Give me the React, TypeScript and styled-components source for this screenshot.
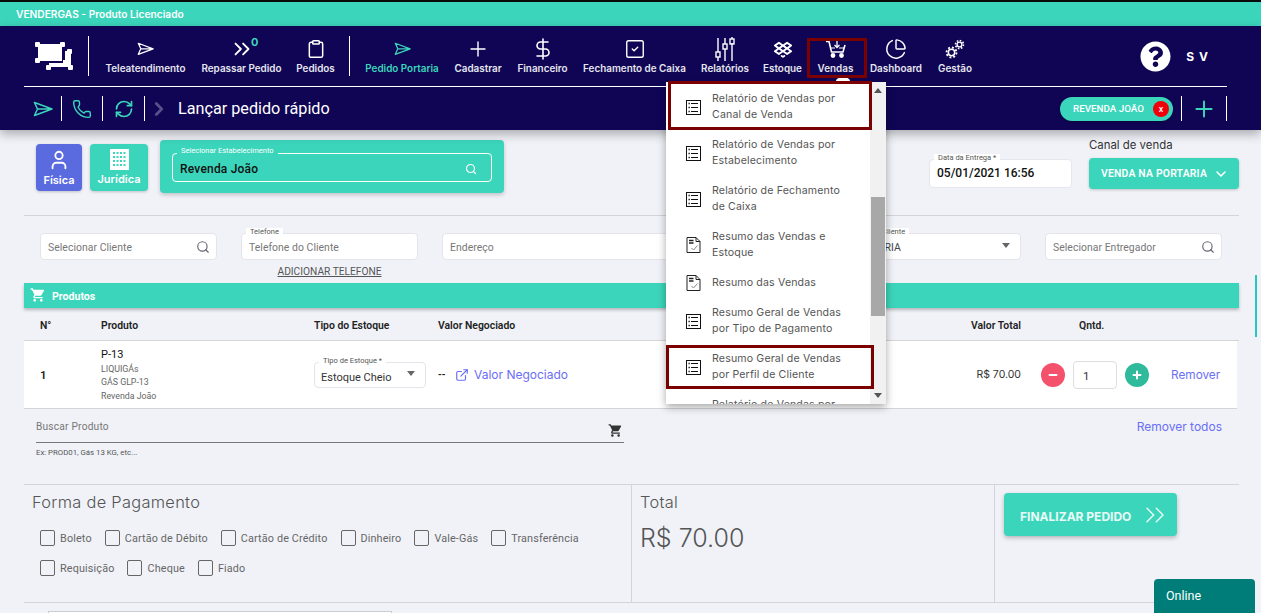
import styled, { createGlobalStyle } from "styled-components"
import {
  ChartPie,
  ChevronDown,
  ChevronRight,
  ChevronsRight,
  Clipboard,
  DollarSign,
  ExternalLink,
  Minus,
  Phone,
  Plus,
  RefreshCw,
  Search,
  SquareCheck,
  User,
} from "lucide-react"
import { FaQuestionCircle } from "react-icons/fa"
import { MdShoppingCart } from "react-icons/md"
import { PiDropboxLogoBold } from "react-icons/pi"

const TEAL = "#3bd5bb"
const NAVY = "#0f0554"
const RED = "#7b0000"
const BLUE = "#6a6ef5"
const LINE = "#d3d3d8"
const SANS = `"Inter", "Open Sans", sans-serif`
const ROBOTO = `"Roboto", "Liberation Sans", sans-serif`

const GlobalStyle = createGlobalStyle`
  * { box-sizing: border-box; }
  html, body { margin: 0; padding: 0; background: #f0f2f8; overflow: hidden; }
  body { font-family: ${ROBOTO}; }
`

function PlaneIcon({ size = 20 }: { size?: number }) {
  return (
    <svg width={size} height={size * 0.8} viewBox="0 0 20 16" fill="none" stroke="currentColor" strokeWidth="1.5">
      <path d="M1.5 1.5 L19 8 L1.5 14.5 L4.5 8 Z M4.5 8 H19" strokeLinejoin="round" />
    </svg>
  )
}

function LogoIcon() {
  return (
    <svg width="38" height="28" viewBox="0 0 38 28" fill="#fff">
      <rect x="3" y="2" width="24" height="17" />
      <rect x="0" y="0" width="5" height="5" rx="1" />
      <rect x="25" y="0" width="5" height="5" rx="1" />
      <rect x="0" y="16" width="5" height="5" rx="1" />
      <path d="M30 9 H36 V25 H14 V21 H28 V18 H30 Z" />
      <rect x="32" y="7" width="5" height="5" rx="1" />
      <rect x="33" y="23" width="5" height="5" rx="1" />
      <rect x="11" y="23" width="5" height="5" rx="1" />
    </svg>
  )
}

function SlidersIcon() {
  return (
    <svg width="20" height="24" viewBox="0 0 20 24" fill="none" stroke="currentColor" strokeWidth="1.4">
      <path d="M3 1 V15 M3 20 V24 M10 1 V7 M10 12 V24 M17 6 V24 M17 0 V2" />
      <rect x="1" y="15" width="4" height="5" />
      <rect x="8" y="7" width="4" height="5" />
      <rect x="15" y="2" width="4" height="5" />
    </svg>
  )
}

function VendasCartIcon() {
  return (
    <svg width="20" height="18" viewBox="0 0 20 18" fill="none" stroke="currentColor" strokeWidth="1.6">
      <path d="M0 1.5 H3 L5.5 12 H17 L19 5" />
      <path d="M11 1 V7 M8.5 5 L11 7.5 L13.5 5" strokeWidth="1.3" />
      <path d="M4.5 8 H9 M13 8 H18" strokeWidth="1.2" />
      <circle cx="7" cy="15.5" r="1.6" fill="currentColor" />
      <circle cx="15.5" cy="15.5" r="1.6" fill="currentColor" />
    </svg>
  )
}

function GearsIcon() {
  return (
    <svg width="20" height="20" viewBox="0 0 20 20" fill="none" stroke="currentColor">
      <circle cx="6.5" cy="13.5" r="3.2" strokeWidth="1.5" />
      <circle cx="6.5" cy="13.5" r="5" strokeWidth="1.8" strokeDasharray="1.9 2" />
      <circle cx="14.5" cy="5.5" r="2.4" strokeWidth="1.4" />
      <circle cx="14.5" cy="5.5" r="4" strokeWidth="1.6" strokeDasharray="1.6 1.5" />
    </svg>
  )
}

function BuildingIcon() {
  return (
    <svg width="19" height="21" viewBox="0 0 19 21" fill="#fff">
      <path
        fillRule="evenodd"
        d="M0 0 H19 V21 H0 Z M3 3 V5 H5 V3 Z M6.5 3 V5 H8.5 V3 Z M10 3 V5 H12 V3 Z M13.5 3 V5 H15.5 V3 Z M3 7 V9 H5 V7 Z M6.5 7 V9 H8.5 V7 Z M10 7 V9 H12 V7 Z M13.5 7 V9 H15.5 V7 Z M3 11 V13 H5 V11 Z M6.5 11 V13 H8.5 V11 Z M10 11 V13 H12 V11 Z M13.5 11 V13 H15.5 V11 Z M3 15 V17 H5 V15 Z M6.5 15 V17 H8.5 V15 Z M10 15 V17 H12 V15 Z M13.5 15 V17 H15.5 V15 Z"
      />
    </svg>
  )
}

function ReportIcon() {
  return (
    <svg width="15" height="15" viewBox="0 0 15 15" fill="none" stroke="#111" strokeWidth="1">
      <rect x="0.5" y="0.5" width="14" height="14" />
      <path d="M5 3.5 H12 M5 7.5 H12 M5 11.5 H12" />
      <path d="M2.5 3.5 H3.8 M2.5 7.5 H3.8 M2.5 11.5 H3.8" strokeWidth="1.3" />
    </svg>
  )
}

function SummaryIcon() {
  return (
    <svg width="15" height="16" viewBox="0 0 15 16" fill="none" stroke="#222" strokeWidth="1">
      <path d="M1 0.5 H10 L14 4.5 V15.5 H1 Z M10 0.5 V4.5 H14" />
      <path d="M3 3.5 H7.5 M3 6 H7.5" strokeWidth="1.3" />
      <path d="M5.5 11 L7.5 13 L11.5 8.5" stroke="#888" />
    </svg>
  )
}

const navLeft = [
  { label: "Teleatendimento", width: 81, icon: <PlaneIcon size={17} /> },
  { label: "Repassar Pedido", width: 79, icon: <ChevronsRight size={26} strokeWidth={1.7} /> },
  { label: "Pedidos", width: 37, icon: <Clipboard size={20} strokeWidth={1.8} /> },
]

const navRight = [
  { label: "Pedido Portaria", width: 72, icon: <PlaneIcon size={17} />, active: true },
  { label: "Cadastrar", width: 48, icon: <Plus size={24} strokeWidth={1.4} /> },
  { label: "Financeiro", width: 49, icon: <DollarSign size={24} strokeWidth={1.6} /> },
  { label: "Fechamento de Caixa", width: 103, icon: <SquareCheck size={22} strokeWidth={1.5} /> },
  { label: "Relatórios", width: 46, icon: <SlidersIcon /> },
  { label: "Estoque", width: 37, icon: <PiDropboxLogoBold size={20} /> },
  { label: "Vendas", width: 37, icon: <VendasCartIcon /> },
  { label: "Dashboard", width: 52, icon: <ChartPie size={22} strokeWidth={1.6} /> },
  { label: "Gestão", width: 34, icon: <GearsIcon /> },
]

const menuItems = [
  { text: "Relatório de Vendas por Canal de Venda", summary: false },
  { text: "Relatório de Vendas por Estabelecimento", summary: false },
  { text: "Relatório de Fechamento de Caixa", summary: false },
  { text: "Resumo das Vendas e Estoque", summary: true },
  { text: "Resumo das Vendas", summary: true, short: true },
  { text: "Resumo Geral de Vendas por Tipo de Pagamento", summary: false },
  { text: "Resumo Geral de Vendas por Perfil de Cliente", summary: false },
  { text: "Relatório de Vendas por Entregador", summary: false },
]

const payments = [
  ["Boleto", "Cartão de Débito", "Cartão de Crédito", "Dinheiro", "Vale-Gás", "Transferência"],
  ["Requisição", "Cheque", "Fiado"],
]

function App() {
  const renderNav = (items: typeof navRight) =>
    items.map((item) => (
      <NavItem key={item.label} $width={item.width} $active={item.active}>
        <NavIcon>{item.icon}</NavIcon>
        <span>{item.label}</span>
      </NavItem>
    ))

  return (
    <Page>
      <GlobalStyle />
      <TopStrip>VENDERGAS - Produto Licenciado</TopStrip>

      <Header>
        <NavRow>
          <LogoBox>
            <LogoIcon />
          </LogoBox>
          <NavDivider />
          <RepassarWrap>
            {renderNav(navLeft as typeof navRight)}
            <NavBadge>0</NavBadge>
          </RepassarWrap>
          <NavDivider />
          {renderNav(navRight)}
          <UserBox>
            <FaQuestionCircle size={31} color="#fff" />
            <UserInitials>S V</UserInitials>
          </UserBox>
        </NavRow>
        <HeaderRule />
        <SubRow>
          <SubIcon $width={37}>
            <PlaneIcon size={20} />
          </SubIcon>
          <SubDivider />
          <SubIcon $width={40}>
            <Phone size={20} strokeWidth={1.7} />
          </SubIcon>
          <SubDivider />
          <SubIcon $width={41}>
            <RefreshCw size={20} strokeWidth={2} />
          </SubIcon>
          <SubDivider />
          <Crumb>
            <ChevronRight size={22} strokeWidth={3} />
          </Crumb>
          <PageTitle>Lançar pedido rápido</PageTitle>
          <SubActions>
            <StoreChip>
              REVENDA JOÃO
              <ChipClose>x</ChipClose>
            </StoreChip>
            <SubDivider />
            <AddButton>
              <Plus size={26} strokeWidth={1.8} />
            </AddButton>
            <SubDivider />
          </SubActions>
        </SubRow>
      </Header>

      <Content>
        <TopRow>
          <PersonButton $bg="#5a6adf" $width={46}>
            <User size={22} strokeWidth={2} />
            <span>Física</span>
          </PersonButton>
          <PersonButton $bg={TEAL} $width={58}>
            <BuildingIcon />
            <span>Jurídica</span>
          </PersonButton>
          <StorePanel>
            <StoreField>
              <StoreLegend>Selecionar Estabelecimento</StoreLegend>
              <span>Revenda João</span>
              <Search size={12} color="#fff" strokeWidth={2.4} />
            </StoreField>
          </StorePanel>
          <DateField>
            <FieldLegend>Data da Entrega *</FieldLegend>
            05/01/2021 16:56
          </DateField>
          <ChannelColumn>
            <ChannelLabel>Canal de venda</ChannelLabel>
            <ChannelButton>
              VENDA NA PORTARIA
              <ChevronDown size={16} strokeWidth={2.4} />
            </ChannelButton>
          </ChannelColumn>
        </TopRow>

        <FieldsRow>
          <InputBox>
            <Placeholder>Selecionar Cliente</Placeholder>
            <Search size={14} color="#667" />
          </InputBox>
          <PhoneColumn>
            <InputBox>
              <FieldLegend>Telefone</FieldLegend>
              <Placeholder>Telefone do Cliente</Placeholder>
            </InputBox>
            <AddPhone>ADICIONAR TELEFONE</AddPhone>
          </PhoneColumn>
          <AddressBox>
            <Placeholder>Endereço</Placeholder>
          </AddressBox>
          <InputBox>
            <FieldLegend>Perfil de Cliente</FieldLegend>
            <SelectValue>PORTARIA</SelectValue>
            <Caret />
          </InputBox>
          <InputBox>
            <Placeholder>Selecionar Entregador</Placeholder>
            <Search size={14} color="#667" />
          </InputBox>
        </FieldsRow>

        <ProductsBar>
          <MdShoppingCart size={16} />
          <span>Produtos</span>
        </ProductsBar>

        <TableHead>
          <span>N°</span>
          <span>Produto</span>
          <span>Tipo do Estoque</span>
          <span>Valor Negociado</span>
          <TotalHead>Valor Total</TotalHead>
          <QtyHead>Qntd.</QtyHead>
        </TableHead>
        <TableRow>
          <RowNumber>1</RowNumber>
          <ProductCell>
            <ProductName>P-13</ProductName>
            <ProductMeta>LIQUIGÁs</ProductMeta>
            <ProductMeta>GÁS GLP-13</ProductMeta>
            <ProductMeta>Revenda João</ProductMeta>
          </ProductCell>
          <StockSelect>
            <FieldLegend>Tipo de Estoque *</FieldLegend>
            <span>Estoque Cheio</span>
            <Caret />
          </StockSelect>
          <NegotiatedCell>
            <span>--</span>
            <ExternalLink size={14} color={BLUE} strokeWidth={2} />
            <NegotiatedLink>Valor Negociado</NegotiatedLink>
          </NegotiatedCell>
          <RowTotal>R$ 70.00</RowTotal>
          <QtyCell>
            <RoundButton $bg="#f4516c">
              <Minus size={12} strokeWidth={4} />
            </RoundButton>
            <QtyInput>1</QtyInput>
            <RoundButton $bg="#2fbb9b">
              <Plus size={12} strokeWidth={4} />
            </RoundButton>
            <RemoveLink>Remover</RemoveLink>
          </QtyCell>
        </TableRow>

        <SearchRow>
          <ProductSearch>
            <SearchLine>
              <span>Buscar Produto</span>
              <MdShoppingCart size={15} color="#333" />
            </SearchLine>
            <SearchHint>Ex: PROD01, Gás 13 KG, etc...</SearchHint>
          </ProductSearch>
          <RemoveAll>Remover todos</RemoveAll>
        </SearchRow>

        <Checkout>
          <PaymentBox>
            <SectionTitle>Forma de Pagamento</SectionTitle>
            <PaymentRows>
              {payments.map((row) => (
                <PaymentRow key={row[0]}>
                  {row.map((name) => (
                    <PaymentOption key={name}>
                      <CheckBox />
                      {name}
                    </PaymentOption>
                  ))}
                </PaymentRow>
              ))}
            </PaymentRows>
          </PaymentBox>
          <TotalBox>
            <SectionTitle>Total</SectionTitle>
            <TotalValue>R$ 70.00</TotalValue>
          </TotalBox>
          <FinishBox>
            <FinishButton>
              <span>FINALIZAR PEDIDO</span>
              <ChevronsRight size={32} strokeWidth={1.1} />
            </FinishButton>
          </FinishBox>
        </Checkout>
        <FooterField />
      </Content>

      <Menu>
        <MenuBubble />
        <MenuList>
          {menuItems.map((item) => (
            <MenuItem key={item.text} $short={item.short}>
              {item.summary ? <SummaryIcon /> : <ReportIcon />}
              <span>{item.text}</span>
            </MenuItem>
          ))}
        </MenuList>
        <MenuScroll>
          <ScrollArrow $up />
          <ScrollThumb />
          <ScrollArrow />
        </MenuScroll>
      </Menu>

      <VendasMark />
      <MenuMarkTop />
      <MenuMarkBottom />
      <PageScrollMark />
      <OnlineTab>Online</OnlineTab>
    </Page>
  )
}

const Page = styled.div`
  position: relative;
  width: 1261px;
  height: 613px;
  overflow: hidden;
  background: #f0f2f8;
  display: flex;
  flex-direction: column;
`

const TopStrip = styled.div`
  height: 26px;
  flex-shrink: 0;
  border-top: 2px solid #0a0a0a;
  background: ${TEAL};
  color: #fff;
  font-family: ${SANS};
  font-size: 10.2px;
  font-weight: 600;
  line-height: 25px;
  padding-left: 16px;
`

const Header = styled.header`
  position: relative;
  z-index: 1;
  height: 104px;
  flex-shrink: 0;
  background: ${NAVY};
  box-shadow: 0 4px 10px rgba(0, 0, 0, 0.3);
`

const NavRow = styled.nav`
  height: 60px;
  display: flex;
  align-items: center;
  gap: 16px;
  padding: 0 52px 0 35px;
`

const LogoBox = styled.div`
  width: 38px;
  height: 28px;
  margin-right: -1px;
  display: flex;
`

const NavDivider = styled.div`
  width: 1px;
  height: 40px;
  background: #fff;
`

const RepassarWrap = styled.div`
  position: relative;
  display: flex;
  gap: 16px;
  margin-right: -1px;
`

const NavBadge = styled.span`
  position: absolute;
  left: 146px;
  top: -3px;
  color: ${TEAL};
  font-family: ${SANS};
  font-size: 11px;
  font-weight: 700;
`

const NavItem = styled.div<{ $width: number; $active?: boolean }>`
  width: ${(p) => p.$width}px;
  display: flex;
  flex-direction: column;
  align-items: center;
  color: ${(p) => (p.$active ? TEAL : "#fff")};
  span {
    color: ${(p) => (p.$active ? TEAL : "#e6e6ee")};
    font-family: ${SANS};
    font-size: 9.9px;
    font-weight: 600;
    white-space: nowrap;
    line-height: 14px;
  }
`

const NavIcon = styled.div`
  height: 23px;
  display: flex;
  align-items: center;
  justify-content: center;
`

const UserBox = styled.div`
  margin-left: auto;
  display: flex;
  align-items: center;
  gap: 15px;
`

const UserInitials = styled.span`
  color: #fff;
  font-family: ${SANS};
  font-size: 12px;
  font-weight: 700;
  letter-spacing: 1px;
`

const HeaderRule = styled.div`
  height: 1px;
  margin-left: 24px;
  width: 1203px;
  background: #fff;
`

const SubRow = styled.div`
  height: 43px;
  display: flex;
  align-items: center;
  padding-left: 24px;
  color: ${TEAL};
`

const SubIcon = styled.div<{ $width: number }>`
  width: ${(p) => p.$width}px;
  display: flex;
  justify-content: center;
  padding-top: 1px;
`

const SubDivider = styled.div`
  width: 1px;
  height: 25px;
  background: #fff;
`

const Crumb = styled.div`
  display: flex;
  margin-left: 3px;
  color: #5a4f8a;
`

const PageTitle = styled.h1`
  margin: 0 0 0 8px;
  color: #fff;
  font-family: ${ROBOTO};
  font-size: 16.2px;
  font-weight: 400;
`

const SubActions = styled.div`
  margin-left: auto;
  margin-right: 34px;
  display: flex;
  align-items: center;
`

const StoreChip = styled.div`
  width: 113px;
  height: 24px;
  margin-right: 8px;
  border-radius: 12px;
  background: ${TEAL};
  color: #fff;
  font-family: ${ROBOTO};
  font-size: 9.8px;
  font-weight: 500;
  display: flex;
  align-items: center;
  padding-left: 13px;
  box-shadow: 0 1px 3px rgba(0, 0, 0, 0.3);
`

const ChipClose = styled.span`
  width: 16px;
  height: 16px;
  margin-left: 9px;
  border-radius: 50%;
  background: #f00008;
  font-size: 9px;
  display: flex;
  align-items: center;
  justify-content: center;
`

const AddButton = styled.div`
  width: 44px;
  display: flex;
  justify-content: center;
`

const Content = styled.main`
  width: 1215px;
  margin-left: 24px;
  display: flex;
  flex-direction: column;
`

const TopRow = styled.section`
  height: 86px;
  padding-top: 10px;
  border-bottom: 1px solid ${LINE};
  display: flex;
  align-items: flex-start;
`

const PersonButton = styled.div<{ $bg: string; $width: number }>`
  width: ${(p) => p.$width}px;
  height: 47px;
  margin: 4px 8px 0 0;
  border-radius: 4px;
  background: ${(p) => p.$bg};
  color: #fff;
  box-shadow: 0 1px 3px rgba(0, 0, 0, 0.2);
  display: flex;
  flex-direction: column;
  align-items: center;
  justify-content: center;
  gap: 2px;
  span {
    font-family: ${SANS};
    font-size: 11px;
    font-weight: 600;
  }
  &:first-child {
    margin-left: 12px;
  }
`

const StorePanel = styled.div`
  width: 344px;
  height: 53px;
  margin-left: 4px;
  padding: 13px 12px 0;
  border-radius: 4px;
  background: ${TEAL};
  box-shadow: 0 2px 4px rgba(0, 0, 0, 0.2);
`

const StoreField = styled.div`
  position: relative;
  height: 29px;
  border: 1px solid #fff;
  border-radius: 4px;
  padding: 2px 14px 0 7px;
  display: flex;
  align-items: center;
  justify-content: space-between;
  color: #111;
  font-family: ${ROBOTO};
  font-size: 12px;
  font-weight: 500;
  letter-spacing: 0.2px;
`

const StoreLegend = styled.label`
  position: absolute;
  left: 4px;
  top: -8px;
  padding: 0 4px;
  background: ${TEAL};
  color: #fff;
  font-size: 7.5px;
  font-weight: 400;
  letter-spacing: 0;
`

const DateField = styled.div`
  position: relative;
  width: 143px;
  height: 29px;
  margin: 19px 17px 0 auto;
  padding-left: 7px;
  border: 1px solid #e6e6ee;
  border-radius: 4px;
  background: #fff;
  color: #111;
  font-family: ${ROBOTO};
  font-size: 12px;
  font-weight: 500;
  line-height: 27px;
`

const FieldLegend = styled.label`
  position: absolute;
  left: 4px;
  top: -6px;
  padding: 0 4px;
  height: 8px;
  line-height: 8px;
  background: #fff;
  color: #555;
  font-family: ${ROBOTO};
  font-size: 7.5px;
  font-weight: 400;
  white-space: nowrap;
`

const ChannelColumn = styled.div`
  width: 150px;
  margin-top: -3px;
`

const ChannelLabel = styled.div`
  height: 21px;
  color: #333;
  font-family: ${SANS};
  font-size: 11.4px;
  line-height: 16px;
`

const ChannelButton = styled.div`
  height: 31px;
  padding: 0 10px 0 12px;
  border-radius: 4px;
  background: ${TEAL};
  box-shadow: 0 1px 3px rgba(0, 0, 0, 0.2);
  color: #fff;
  font-family: ${ROBOTO};
  font-size: 10.4px;
  font-weight: 600;
  letter-spacing: 0.2px;
  display: flex;
  align-items: center;
  justify-content: space-between;
`

const FieldsRow = styled.section`
  height: 50px;
  margin-top: 17px;
  padding-left: 16px;
  display: grid;
  grid-template-columns: repeat(6, 177px);
  column-gap: 24px;
  align-items: start;
`

const InputBox = styled.div`
  position: relative;
  height: 27px;
  padding: 1px 6px 0 7px;
  border: 1px solid #e4e4ea;
  border-radius: 4px;
  background: #fff;
  display: flex;
  align-items: center;
  justify-content: space-between;
`

const AddressBox = styled(InputBox)`
  grid-column: span 2;
`

const Placeholder = styled.span`
  color: #777;
  font-family: ${ROBOTO};
  font-size: 10.4px;
  letter-spacing: 0.05px;
`

const SelectValue = styled.span`
  color: #444;
  font-family: ${ROBOTO};
  font-size: 10.5px;
`

const Caret = styled.i`
  width: 0;
  height: 0;
  border-left: 4.5px solid transparent;
  border-right: 4.5px solid transparent;
  border-top: 5px solid #666;
  margin: 0 4px 3px 0;
`

const PhoneColumn = styled.div`
  display: flex;
  flex-direction: column;
  align-items: stretch;
`

const AddPhone = styled.a`
  margin-top: 6px;
  text-align: center;
  color: #555;
  font-family: ${ROBOTO};
  font-size: 10.2px;
  line-height: 12px;
  text-decoration: underline;
`

const ProductsBar = styled.div`
  height: 25px;
  padding-left: 6px;
  background: ${TEAL};
  box-shadow: 0 2px 3px rgba(0, 0, 0, 0.25);
  color: #fff;
  display: flex;
  align-items: center;
  gap: 6px;
  svg {
    margin-bottom: 2px;
  }
  span {
    margin-top: 2px;
    font-family: ${ROBOTO};
    font-size: 10.6px;
    font-weight: 700;
  }
`

const TableHead = styled.div`
  height: 33px;
  padding: 3px 0 0 16px;
  border-bottom: 1px solid ${LINE};
  display: grid;
  grid-template-columns: 61px 213px 124px 533px 50px 1fr;
  align-items: center;
  color: #222;
  font-family: ${ROBOTO};
  font-size: 10.4px;
  font-weight: 600;
  white-space: nowrap;
`

const TotalHead = styled.span`
  text-align: right;
`

const QtyHead = styled.span`
  padding-left: 58px;
`

const TableRow = styled.div`
  height: 68px;
  width: 1213px;
  padding-left: 16px;
  background: #fff;
  border-bottom: 1px solid ${LINE};
  display: grid;
  grid-template-columns: 61px 213px 124px 533px 50px 1fr;
  align-items: center;
`

const RowNumber = styled.span`
  color: #222;
  font-family: ${ROBOTO};
  font-size: 11.5px;
  font-weight: 600;
`

const ProductCell = styled.div`
  display: flex;
  flex-direction: column;
  padding-top: 1px;
`

const ProductName = styled.span`
  color: #111;
  font-family: ${ROBOTO};
  font-size: 11px;
  line-height: 15px;
  margin-bottom: 1px;
`

const ProductMeta = styled.span`
  color: #666;
  font-family: ${ROBOTO};
  font-size: 8.8px;
  line-height: 13.5px;
`

const StockSelect = styled.div`
  position: relative;
  width: 112px;
  height: 26px;
  margin-top: 1px;
  padding: 0 6px;
  border: 1px solid #e4e4ea;
  border-radius: 4px;
  display: flex;
  align-items: center;
  justify-content: space-between;
  color: #333;
  font-family: ${ROBOTO};
  font-size: 11px;
  span {
    margin-top: 5px;
  }
`

const NegotiatedCell = styled.div`
  display: flex;
  align-items: center;
  color: #222;
  font-family: ${ROBOTO};
  font-size: 10px;
  font-weight: 600;
  span {
    width: 17px;
  }
`

const NegotiatedLink = styled.a`
  margin-left: 5px;
  color: ${BLUE};
  font-family: ${SANS};
  font-size: 12px;
  font-weight: 400;
`

const RowTotal = styled.span`
  text-align: right;
  white-space: nowrap;
  color: #333;
  font-family: ${SANS};
  font-size: 10.5px;
`

const QtyCell = styled.div`
  padding-left: 20px;
  display: flex;
  align-items: center;
  gap: 8px;
`

const RoundButton = styled.div<{ $bg: string }>`
  width: 24px;
  height: 24px;
  border-radius: 50%;
  background: ${(p) => p.$bg};
  color: #fff;
  display: flex;
  align-items: center;
  justify-content: center;
`

const QtyInput = styled.div`
  width: 44px;
  height: 28px;
  padding: 2px 0 0 9px;
  border: 1px solid #ddd;
  border-radius: 4px;
  color: #333;
  font-family: ${ROBOTO};
  font-size: 11.5px;
  line-height: 24px;
`

const RemoveLink = styled.a`
  margin-left: 14px;
  color: ${BLUE};
  font-family: ${SANS};
  font-size: 11.8px;
`

const SearchRow = styled.section`
  height: 75px;
  padding: 9px 17px 0 12px;
  display: flex;
  justify-content: space-between;
  align-items: flex-start;
`

const ProductSearch = styled.div`
  width: 588px;
`

const SearchLine = styled.div`
  height: 25px;
  padding-right: 1px;
  border-bottom: 1px solid #777;
  display: flex;
  align-items: center;
  justify-content: space-between;
  color: #777;
  font-family: ${ROBOTO};
  font-size: 10.2px;
  letter-spacing: 0.2px;
  span {
    margin-bottom: 8px;
  }
`

const SearchHint = styled.div`
  margin-top: 5px;
  color: #555;
  font-family: ${ROBOTO};
  font-size: 7.8px;
`

const RemoveAll = styled.a`
  color: ${BLUE};
  font-family: ${SANS};
  font-size: 12px;
  margin-top: 1px;
`

const Checkout = styled.section`
  height: 119px;
  border-top: 1px solid ${LINE};
  border-bottom: 1px solid ${LINE};
  display: grid;
  grid-template-columns: 607px 364px 1fr;
`

const PaymentBox = styled.div`
  padding: 7px 0 0 8px;
`

const SectionTitle = styled.h3`
  margin: 0;
  color: #555;
  font-family: ${SANS};
  font-size: 16.4px;
  font-weight: 300;
  letter-spacing: 0.3px;
  line-height: 20px;
`

const PaymentRows = styled.div`
  margin: 18px 0 0 8px;
  display: flex;
  flex-direction: column;
  gap: 14px;
`

const PaymentRow = styled.div`
  display: flex;
  gap: 13px;
`

const PaymentOption = styled.label`
  display: flex;
  align-items: center;
  gap: 5px;
  height: 16px;
  color: #666;
  font-family: ${ROBOTO};
  font-size: 10.8px;
  letter-spacing: 0.15px;
`

const CheckBox = styled.span`
  width: 15px;
  height: 16px;
  border: 1px solid #666;
  border-radius: 2px;
`

const TotalBox = styled.div`
  padding: 7px 0 0 8px;
  border-left: 1px solid ${LINE};
  border-right: 1px solid ${LINE};
`

const TotalValue = styled.div`
  margin-top: 11px;
  color: #555;
  font-family: ${SANS};
  font-size: 25px;
  font-weight: 300;
`

const FinishBox = styled.div`
  padding: 8px 0 0 9px;
`

const FinishButton = styled.div`
  width: 173px;
  height: 43px;
  padding: 0 6px 0 16px;
  border-radius: 4px;
  background: ${TEAL};
  box-shadow: 0 2px 4px rgba(0, 0, 0, 0.25);
  color: #e8fbf6;
  font-family: ${SANS};
  font-size: 12px;
  font-weight: 700;
  display: flex;
  align-items: center;
  justify-content: space-between;
  span {
    margin-top: 3px;
    white-space: nowrap;
  }
`

const FooterField = styled.div`
  width: 344px;
  height: 8px;
  margin: 8px 0 0 24px;
  border: 1px solid #ccc;
  background: #fff;
`

const Menu = styled.div`
  position: absolute;
  z-index: 3;
  left: 666px;
  top: 82px;
  width: 220px;
  height: 322px;
  background: #fff;
  box-shadow: 0 3px 8px rgba(0, 0, 0, 0.35);
  display: flex;
`

const MenuBubble = styled.div`
  position: absolute;
  left: 170px;
  top: -5px;
  width: 14px;
  height: 8px;
  border-radius: 50% 50% 0 0;
  background: #fff;
`

const MenuList = styled.div`
  flex: 1;
  min-width: 0;
  padding-top: 2px;
  overflow: hidden;
`

const MenuItem = styled.div<{ $short?: boolean }>`
  height: ${(p) => (p.$short ? 30 : 46)}px;
  padding: 0 10px 0 20px;
  display: flex;
  align-items: center;
  gap: 11px;
  svg {
    flex-shrink: 0;
  }
  span {
    max-width: 140px;
    color: #555;
    font-family: ${SANS};
    font-size: 10.6px;
    letter-spacing: 0.15px;
    line-height: 16px;
  }
`

const MenuScroll = styled.div`
  width: 16px;
  background: #f1f1f1;
  position: relative;
  display: flex;
  flex-direction: column;
  justify-content: space-between;
  align-items: center;
  padding: 6px 0;
`

const ScrollArrow = styled.i<{ $up?: boolean }>`
  width: 0;
  height: 0;
  border-left: 4px solid transparent;
  border-right: 4px solid transparent;
  border-top: ${(p) => (p.$up ? "0" : "5px solid #555")};
  border-bottom: ${(p) => (p.$up ? "5px solid #555" : "0")};
`

const ScrollThumb = styled.div`
  position: absolute;
  left: 1px;
  right: 1px;
  top: 115px;
  height: 119px;
  background: #a8a8a8;
`

const Mark = styled.div`
  position: absolute;
  z-index: 4;
  border: 3px solid ${RED};
`

const VendasMark = styled(Mark)`
  left: 807px;
  top: 38px;
  width: 60px;
  height: 40px;
`

const MenuMarkTop = styled(Mark)`
  left: 668px;
  top: 81px;
  width: 204px;
  height: 49px;
`

const MenuMarkBottom = styled(Mark)`
  left: 666px;
  top: 345px;
  width: 208px;
  height: 44px;
`

const PageScrollMark = styled.div`
  position: absolute;
  left: 1255px;
  top: 275px;
  width: 2px;
  height: 62px;
  background: #26c6c0;
`

const OnlineTab = styled.div`
  position: absolute;
  z-index: 5;
  left: 1154px;
  top: 579px;
  width: 101px;
  height: 34px;
  padding: 9px 0 0 12px;
  border-radius: 4px 4px 0 0;
  background: #007d78;
  color: #fff;
  font-family: ${ROBOTO};
  font-size: 12.5px;
  font-weight: 400;
`

export default App
